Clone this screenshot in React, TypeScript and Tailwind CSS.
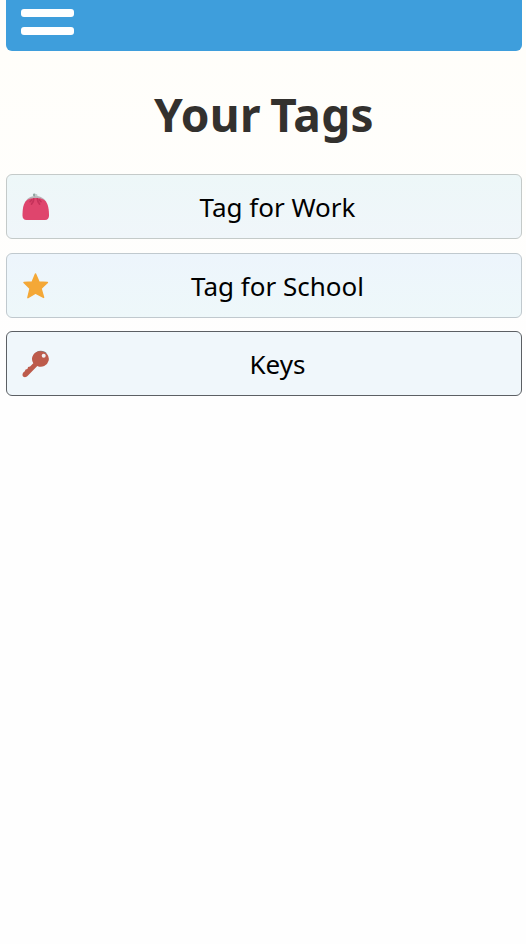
import type { ReactNode } from "react";

function PurseIcon() {
  return (
    <svg viewBox="0 0 28 28" className="h-7 w-7">
      <path d="M3 9.500C5 5.200 8.500 3.200 13 3c5.200 0 9 1.800 11 6l-2 2H5z" fill="#b9b4b8" />
      <circle cx="12.300" cy="2" r="1.400" fill="#8fa5a0" />
      <circle cx="14.200" cy="2.300" r="1.200" fill="#c3c9c9" />
      <path d="M3.600 8.400C5.800 5.800 9.500 5 13.700 5c4 0 7.800.6 10.200 3.600C26.200 11.600 27 17 27 22.300c0 3-1.300 4.700-4 4.700H4.500c-2.700 0-4-1.600-4-4.500C.5 17 1.100 11.400 3.600 8.400z" fill="#df456d" />
      <path d="M11.800 5.800c0 2.300-.9 4-2.300 5.300M9.700 6.800c-.4.700-.9 1.300-1.500 1.800M15.300 5.800c.2 2.300 1 4 2.300 5.300M17.400 6.800c.4.700.9 1.300 1.500 1.800" fill="none" stroke="#c5325a" strokeWidth="1.700" strokeLinecap="round" />
    </svg>
  );
}

function StarIcon() {
  return (
    <svg viewBox="0 0 28 28" className="h-7 w-7">
      <path d="M13.500 2l3.400 7.900 8.500.5-6.400 6.100 2.600 8.900-8.100-4.300-7.600 4.500 2.200-9.200L2 10.500l8.300-.6z" fill="#f4a837" stroke="#f4a837" strokeWidth="1.500" strokeLinejoin="round" />
    </svg>
  );
}

function KeyIcon() {
  return (
    <svg viewBox="0 0 28 28" className="h-7 w-7">
      <path d="M11.500 5.500C13 2.500 15.600 .7 18.800.7c2.600 0 4.700 1 6.200 2.800z" fill="#77848a" />
      <path d="M19 1.300a8 7.700 0 1 1-3.700 14.600L6 25.600c-1.500 1.500-3.200 2-4.600 1.100-.9-.7-1-1.600-.8-2.600.3-1.200.9-2.200 2-2.700l1-1.900 1.800-.6.7-1.900 2-.5 3.200-3.300A7.800 7.800 0 0 1 19 1.300z" fill="#bd5b4b" />
      <circle cx="21.700" cy="5.800" r="2" fill="#f1eff0" />
    </svg>
  );
}

function TagRow({ icon, label, className }: { icon: ReactNode; label: string; className: string }) {
  return (
    <button className={`flex h-[65px] w-full items-center rounded-md border pr-4 pl-[15px] text-black ${className}`}>
      {icon}
      <span className="flex-1 text-center text-[26px] leading-9">{label}</span>
    </button>
  );
}

export default function App() {
  return (
    <main className="h-[944px] w-[526px] overflow-hidden bg-linear-to-b from-[#fffefa] from-5% to-[#fefefe] to-40% pr-1 pl-1.5 font-['Noto_Sans',sans-serif]">
      <header className="h-[51px] rounded-b-md bg-[#3e9edc] px-[15px] pt-[9px]">
        <button aria-label="Menu" className="flex w-[53px] flex-col gap-[10px]">
          <span className="h-2 w-full rounded-[3px] bg-white" />
          <span className="h-2 w-full rounded-[3px] bg-white" />
        </button>
      </header>
      <h1 className="flex h-[123px] items-center justify-center pt-0.5 text-[46px] leading-none font-bold tracking-[0.3px] [word-spacing:-3px] text-[#33312e]">
        Your Tags
      </h1>
      <div className="flex flex-col">
        <TagRow icon={<PurseIcon />} label="Tag for Work" className="mb-[14px] border-[#c4cac9] bg-linear-to-b from-[#edf7f8] to-[#f0f6fa]" />
        <TagRow icon={<StarIcon />} label="Tag for School" className="mb-[13px] border-[#c0c9ce] bg-linear-to-b from-[#edf5fc] to-[#eef8fa]" />
        <TagRow icon={<KeyIcon />} label="Keys" className="border-[#5c6064] bg-[#f0f7fb]" />
      </div>
    </main>
  );
}
